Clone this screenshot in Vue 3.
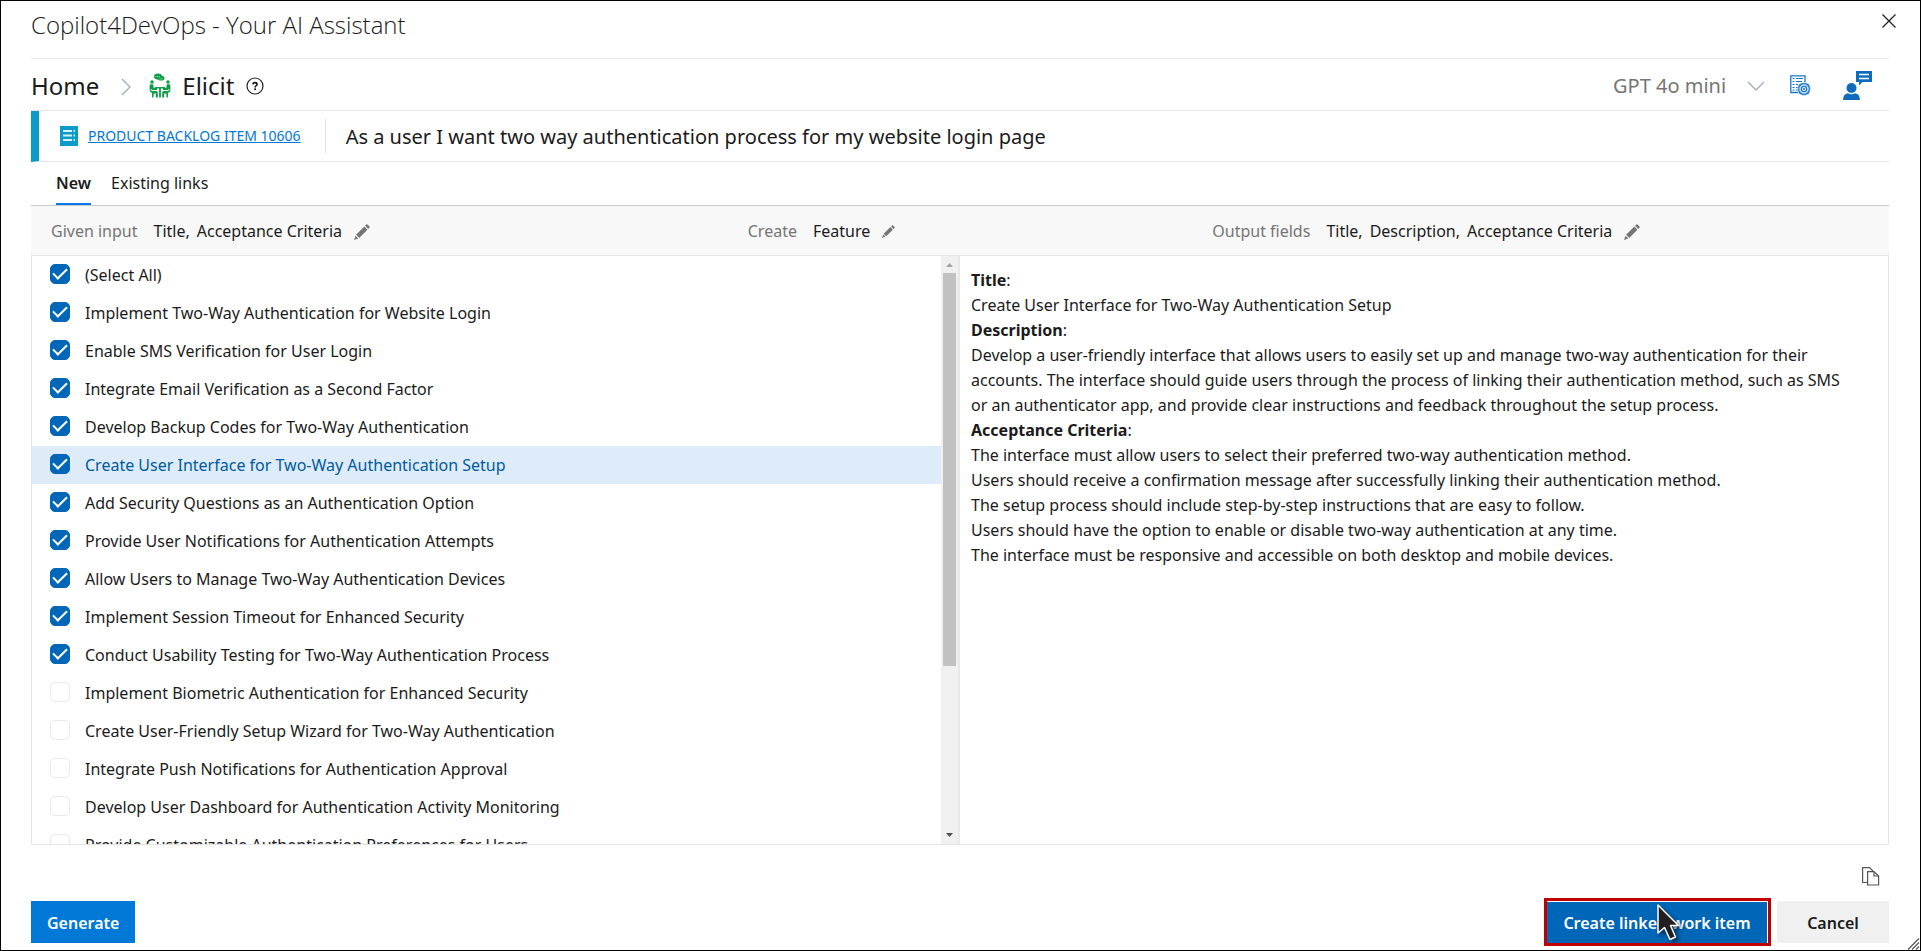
<script setup>
import { ref } from 'vue'

const models = ['GPT 4o mini']
const model = ref(models[0])

const items = ref([
  { text: '(Select All)', checked: true },
  { text: 'Implement Two-Way Authentication for Website Login', checked: true },
  { text: 'Enable SMS Verification for User Login', checked: true },
  { text: 'Integrate Email Verification as a Second Factor', checked: true },
  { text: 'Develop Backup Codes for Two-Way Authentication', checked: true },
  { text: 'Create User Interface for Two-Way Authentication Setup', checked: true },
  { text: 'Add Security Questions as an Authentication Option', checked: true },
  { text: 'Provide User Notifications for Authentication Attempts', checked: true },
  { text: 'Allow Users to Manage Two-Way Authentication Devices', checked: true },
  { text: 'Implement Session Timeout for Enhanced Security', checked: true },
  { text: 'Conduct Usability Testing for Two-Way Authentication Process', checked: true },
  { text: 'Implement Biometric Authentication for Enhanced Security', checked: false },
  { text: 'Create User-Friendly Setup Wizard for Two-Way Authentication', checked: false },
  { text: 'Integrate Push Notifications for Authentication Approval', checked: false },
  { text: 'Develop User Dashboard for Authentication Activity Monitoring', checked: false },
  { text: 'Provide Customizable Authentication Preferences for Users', checked: false }
])
const active = ref(5)

const filters = [
  { label: 'Given input', values: ['Title,', 'Acceptance Criteria'], small: false },
  { label: 'Create', values: ['Feature'], small: true },
  { label: 'Output fields', values: ['Title,', 'Description,', 'Acceptance Criteria'], small: false }
]

const criteria = [
  'The interface must allow users to select their preferred two-way authentication method.',
  'Users should receive a confirmation message after successfully linking their authentication method.',
  'The setup process should include step-by-step instructions that are easy to follow.',
  'Users should have the option to enable or disable two-way authentication at any time.',
  'The interface must be responsive and accessible on both desktop and mobile devices.'
]
</script>

<template>
  <div class="dialog">
    <header class="titlebar">
      <h1>Copilot4DevOps - Your AI Assistant</h1>
      <button class="icon-btn close" aria-label="Close">
        <svg width="14" height="14" viewBox="0 0 14 14"><path d="M.5.5l13 13M13.5.5l-13 13" fill="none" stroke="#222" stroke-width="1.3" /></svg>
      </button>
    </header>

    <nav class="crumbs">
      <a href="#" class="home">Home</a>
      <svg class="sep" width="10" height="18" viewBox="0 0 10 18"><path d="M1 1l8 8-8 8" fill="none" stroke="#a3a9b8" stroke-width="1.3" /></svg>
      <svg class="elicit-icon" width="22" height="25" viewBox="0 0 22 25" fill="#0f9d45">
        <ellipse cx="9" cy="3.400" rx="4" ry="3" />
        <ellipse cx="12" cy="5.200" rx="3.400" ry="2.400" />
        <path d="M6.500 3.600h5M10.500 5.800h3.500" stroke="#d7f0e0" stroke-width=".8" stroke-dasharray="1 .7" />
        <circle cx="3" cy="9" r="1.800" />
        <circle cx="19" cy="9" r="1.800" />
        <path d="M.6 12.500Q.6 11.200 2 11.200H3.500Q4.300 11.200 4.400 12.300L4.800 15H8V17H3.200Q2.400 17 2.200 16L1.400 16.200Q1.600 18 3.500 18H7.200Q8.800 18 8.800 19.500V24.500H6.800V20.500H4.800L4.400 24.500H3L3.100 20Q.8 19.600.6 17z" />
        <path d="M21.400 12.500Q21.400 11.200 20 11.200H18.500Q17.700 11.200 17.600 12.300L17.200 15H14V17H18.800Q19.600 17 19.800 16L20.600 16.200Q20.400 18 18.500 18H14.800Q13.200 18 13.200 19.500V24.500H15.200V20.500H17.200L17.600 24.500H19L18.900 20Q21.200 19.600 21.400 17z" />
        <path d="M6 14h10v1.600h-4.100v8.900h-1.800v-8.900H6z" />
      </svg>
      <span class="page">Elicit</span>
      <button class="icon-btn" aria-label="Help">
        <svg width="18" height="18" viewBox="0 0 18 18">
          <circle cx="9" cy="9" r="8" fill="none" stroke="#222" stroke-width="1.2" />
          <path d="M6.900 7.400Q7 5.600 9 5.600T11.100 7.300Q11.100 8.300 10 8.900 9.100 9.400 9.100 10.400" fill="none" stroke="#111" stroke-width="1.600" />
          <rect x="8.200" y="11.400" width="1.800" height="1.700" fill="#111" />
        </svg>
      </button>
      <div class="tools">
        <label class="model">
          <select v-model="model" aria-label="Model">
            <option v-for="m in models" :key="m">{{ m }}</option>
          </select>
          <svg width="18" height="10" viewBox="0 0 18 10"><path d="M1 1l8 8 8-8" fill="none" stroke="#a3a9b8" stroke-width="1.3" /></svg>
        </label>
        <button class="icon-btn" aria-label="Template settings">
          <svg width="21" height="21" viewBox="0 0 21 21" fill="none" stroke="#1a76c7">
            <path d="M15 7V.8H.8V17.500H8" stroke-width="1.300" />
            <path d="M2.500 3.500h2M6 3.500h7M2.500 6.500h2M6 6.500h6M2.500 9.500h2M6 9.500h2M2.500 12.500h2M6 12.500h1.500M2.500 15h2M6 15h1.500" stroke-width="1.200" />
            <circle cx="14" cy="14" r="5.500" fill="#d3e6f6" stroke-width="1.800" stroke-opacity=".8" />
            <path d="M9.200 9.500l1.200 1M18.800 9.500l-1.200 1M9.200 18.500l1.200-1M18.800 18.500l-1.200-1" stroke-width="2.600" stroke-opacity=".8" />
            <circle cx="14" cy="14" r="2.600" fill="#fff" stroke-width="1.300" />
            <circle cx="14" cy="14" r=".7" />
          </svg>
        </button>
        <button class="icon-btn feedback" aria-label="Feedback">
          <svg width="30" height="30" viewBox="0 0 30 30" fill="#0f6cbd">
            <path d="M13 0H29V11H19.500L16 14.500V11H13z" />
            <path d="M16 3.500h10M16 7.500h10" stroke="#fff" stroke-width="1.500" />
            <circle cx="8.500" cy="17" r="5" />
            <path d="M0 29Q0 23 5 22.200Q8.500 24.200 12 22.200Q17 23 17 29z" />
          </svg>
        </button>
      </div>
    </nav>

    <section class="work-item">
      <svg width="18" height="20" viewBox="0 0 18 20">
        <rect width="18" height="20" fill="#0a9bcb" />
        <path d="M3 5h9M3 9.500h9M3 14h9M13.500 5H15M13.500 9.500H15M13.500 14H15" stroke="#d9f1fa" stroke-width="1.800" />
      </svg>
      <a href="#">PRODUCT BACKLOG ITEM 10606</a>
      <h2>As a user I want two way authentication process for my website login page</h2>
    </section>

    <div class="tabs" role="tablist">
      <button role="tab" class="tab selected" aria-selected="true">New</button>
      <button role="tab" class="tab" aria-selected="false">Existing links</button>
    </div>

    <div class="filters">
      <div v-for="f in filters" :key="f.label" class="filter">
        <span class="name">{{ f.label }}</span>
        <span v-for="v in f.values" :key="v" class="value">{{ v }}</span>
        <button class="icon-btn" :aria-label="'Edit ' + f.label">
          <svg :width="f.small ? 13 : 16" :height="f.small ? 13 : 16" viewBox="0 0 16 16" fill="#757575">
            <path d="M12.400.4Q13 0 13.500.5L15.500 2.500Q16 3 15.500 3.600L14.200 4.900 11.100 1.800z" />
            <path d="M10.300 2.600L13.400 5.700 5.200 13.900 2.100 10.800z" />
            <path d="M1.500 11.700L4.300 14.500 0 16z" />
          </svg>
        </button>
      </div>
    </div>

    <main class="panes">
      <div class="left">
        <ul class="list">
          <li v-for="(it, i) in items" :key="it.text" :class="{ active: i === active }" @click="active = i">
            <input :id="'item-' + i" v-model="it.checked" type="checkbox" />
            <label :for="'item-' + i">{{ it.text }}</label>
          </li>
        </ul>
        <div class="scrollbar">
          <svg width="7" height="4" viewBox="0 0 7 4"><path d="M3.500 0L7 4H0z" fill="#a3a3a3" /></svg>
          <div class="track"><div class="thumb"></div></div>
          <svg width="7" height="4" viewBox="0 0 7 4"><path d="M0 0h7L3.500 4z" fill="#505050" /></svg>
        </div>
      </div>
      <article class="detail">
        <p><strong>Title</strong>:</p>
        <p>Create User Interface for Two-Way Authentication Setup</p>
        <p><strong>Description</strong>:</p>
        <p>Develop a user-friendly interface that allows users to easily set up and manage two-way authentication for their accounts. The interface should guide users through the process of linking their authentication method, such as SMS or an authenticator app, and provide clear instructions and feedback throughout the setup process.</p>
        <p><strong>Acceptance Criteria</strong>:</p>
        <p v-for="c in criteria" :key="c">{{ c }}</p>
      </article>
    </main>

    <div class="copy-row">
      <button class="icon-btn" aria-label="Copy">
        <svg width="18" height="19" viewBox="0 0 18 19" fill="#fff" stroke="#555" stroke-width="1.200">
          <path d="M5.500 15.500H.6V.6H7.500L11 4" />
          <path d="M5.600 4.600H12L16.600 9V18H5.600z" />
          <path d="M12 4.600V9H16.600" fill="none" />
        </svg>
      </button>
    </div>

    <footer class="actions">
      <button class="btn generate">Generate</button>
      <div class="callout">
        <button class="btn create">Create linked work item</button>
        <svg class="cursor" width="34" height="46" viewBox="0 0 34 46">
          <path d="M2 2V30L8.500 24.500 14 36.500 19.500 34 14.500 22.500H22.500z" fill="#231f20" stroke="#fff" stroke-width="1.500" stroke-linejoin="round" />
        </svg>
      </div>
      <button class="btn cancel">Cancel</button>
    </footer>

    <svg class="grip" width="13" height="12" viewBox="0 0 13 12"><path d="M1 11.500L12 .5M5 11.500L12 4.500M9 11.500L12 8.500" stroke="#555" stroke-width="1.200" /></svg>
  </div>
</template>

<style>
html,
body {
  margin: 0;
  background: #fff;
}
</style>

<style scoped>
* {
  box-sizing: border-box;
}
.dialog {
  position: relative;
  display: flex;
  flex-direction: column;
  height: 100vh;
  padding: 0 31px 4px 30px;
  border: 1px solid #000;
  background: #fff;
  color: #1b1b1b;
  font-family: "Noto Sans", "Open Sans", sans-serif;
  font-size: 16px;
  line-height: 25px;
}
button,
select,
input {
  font: inherit;
  color: inherit;
  margin: 0;
}
svg {
  display: block;
  flex: none;
}
h1,
h2,
p,
ul {
  margin: 0;
  padding: 0;
}
.icon-btn {
  display: block;
  padding: 0;
  border: 0;
  background: none;
  flex: none;
}
.titlebar {
  display: flex;
  align-items: flex-start;
  justify-content: space-between;
  height: 58px;
  border-bottom: 1px solid #e8e8e8;
}
h1 {
  padding-top: 8px;
  font-family: "Open Sans", "Noto Sans", sans-serif;
  font-size: 24px;
  font-weight: 300;
  line-height: 32px;
}
.close {
  padding-top: 13px;
  margin-right: -7px;
}
.crumbs {
  display: flex;
  align-items: center;
  height: 52px;
  padding-top: 2px;
  border-bottom: 1px solid #e8e8e8;
}
.home,
.page {
  color: inherit;
  font-size: 24px;
  line-height: 32px;
  text-decoration: none;
}
.sep {
  margin: 3px 18px 0 22px;
}
.page {
  margin: 0 12px 0 11px;
}
.tools {
  display: flex;
  align-items: center;
  margin-left: auto;
}
.model {
  display: flex;
  align-items: center;
  gap: 20px;
  margin-right: 25px;
}
select {
  appearance: none;
  padding: 0;
  border: 0;
  background: none;
  color: #757575;
  font-size: 20px;
  line-height: 28px;
}
.feedback {
  margin: 0 16px 0 32px;
}
.work-item {
  display: flex;
  align-items: center;
  height: 51px;
  padding-left: 21px;
  border-left: 8px solid #0a9bcb;
  border-bottom: 1px solid #e8e8e8;
}
.work-item a {
  margin-left: 10px;
  padding-right: 24px;
  border-right: 1px solid #e1e1e1;
  color: #0078d7;
  font-size: 14px;
  line-height: 34px;
}
h2 {
  padding: 2px 0 0 20px;
  font-size: 20px;
  font-weight: 400;
  line-height: 28px;
}
.tabs {
  display: flex;
  gap: 20px;
  height: 44px;
  padding-left: 25px;
  border-bottom: 1px solid #c8c8c8;
}
.tab {
  padding: 2px 0 0;
  border: 0;
  border-bottom: 2px solid transparent;
  background: none;
}
.tab.selected {
  border-color: #0a78f0;
  font-weight: 600;
}
.filters {
  display: grid;
  grid-template-columns: 3fr 2fr 3fr;
  height: 49px;
  background: #f8f8f8;
}
.filter {
  display: flex;
  align-items: center;
  padding: 2px 0 0 20px;
  white-space: nowrap;
}
.name {
  margin-right: 9px;
  color: #757575;
}
.value {
  margin-left: 7px;
}
.filter .icon-btn {
  margin-left: 12px;
}
.panes {
  display: grid;
  grid-template-columns: 1fr 1fr;
  flex: 1;
  min-height: 0;
  border: 1px solid #e5e5e5;
}
.left {
  display: flex;
  min-height: 0;
  border-right: 2px solid #e8e8e8;
}
.list {
  flex: 1;
  overflow: hidden;
  list-style: none;
}
li {
  display: flex;
  align-items: center;
  gap: 15px;
  height: 38px;
  padding-left: 18px;
}
li.active {
  background: #deecf9;
  color: #005a9e;
}
li label {
  padding-top: 1px;
}
input {
  appearance: none;
  display: grid;
  place-items: center;
  flex: none;
  width: 20px;
  height: 20px;
  margin-bottom: 2px;
  border: 1px solid #ebebeb;
  border-radius: 5px;
  background: #fff;
}
input:checked {
  border-color: #0067b8;
  background: #0067b8;
}
input:checked::after {
  content: "";
  width: 12px;
  height: 6px;
  margin-bottom: 4px;
  border: solid #fff;
  border-width: 0 0 2px 2px;
  transform: rotate(-45deg);
}
.scrollbar {
  display: flex;
  flex-direction: column;
  align-items: center;
  width: 17px;
  padding: 7px 2px;
  background: #f0f0f0;
}
.track {
  flex: 1;
  width: 13px;
  margin: 6px 0;
}
.thumb {
  height: 71%;
  background: #c1c1c1;
}
.detail {
  padding: 12px 36px 0 11px;
}
.copy-row {
  display: flex;
  align-items: flex-start;
  justify-content: flex-end;
  height: 53px;
  padding: 22px 9px 0 0;
}
.actions {
  display: flex;
  align-items: center;
  height: 48px;
}
.btn {
  height: 42px;
  padding: 2px 16px 0;
  border: 0;
  font-weight: 600;
  white-space: nowrap;
}
.generate {
  background: #0078d7;
  color: #fff;
}
.callout {
  position: relative;
  margin-left: auto;
  padding: 1px 1px 0 0;
  border: 3px solid #c00000;
}
.create {
  display: block;
  width: 220px;
  height: 41px;
  background: #0067b8;
  color: #fff;
}
.cursor {
  position: absolute;
  left: 109px;
  top: 2px;
  filter: drop-shadow(3px 3px 2px rgba(0, 0, 0, 0.5));
}
.cancel {
  width: 112px;
  margin-left: 6px;
  background: #f0f0f0;
}
.grip {
  position: absolute;
  right: 0;
  bottom: 0;
}
</style>
